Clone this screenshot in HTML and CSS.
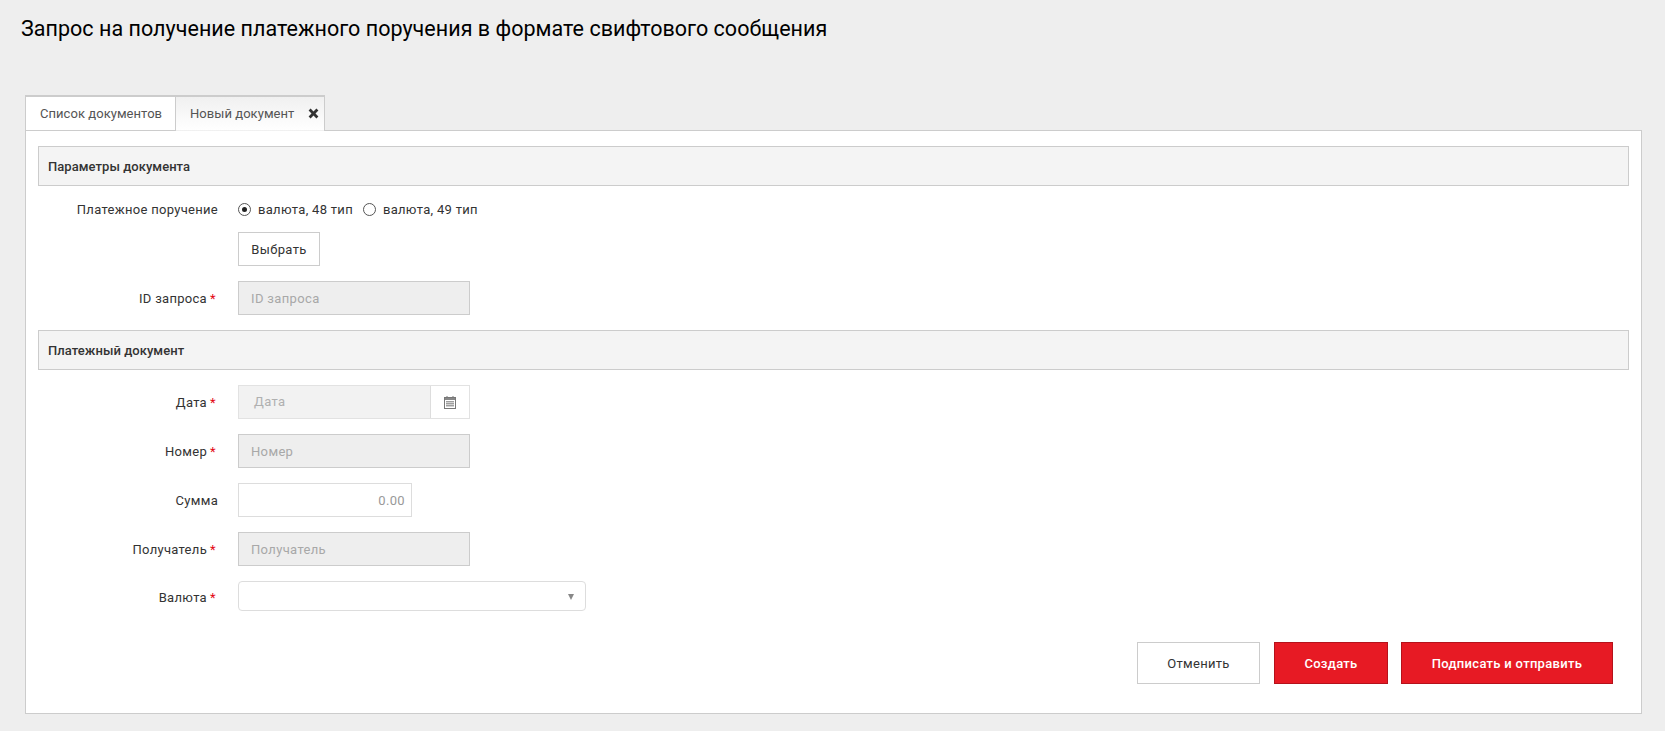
FILE: index.html
```html
<!DOCTYPE html>
<html lang="ru">
<head>
<meta charset="utf-8">
<title>Запрос</title>
<link rel="stylesheet" href="styles.css">
</head>
<body>
<h1 class="title">Запрос на получение платежного поручения в формате свифтового сообщения</h1>
<div class="tabs">
  <div class="tab">Список документов</div>
  <div class="tab active">Новый документ
    <svg class="close" width="11" height="11" viewBox="0 0 11 11"><path d="M2.6 0.6 5.5 3.5 8.4 0.6 10.4 2.6 7.5 5.5 10.4 8.4 8.4 10.4 5.5 7.5 2.6 10.4 0.6 8.4 3.5 5.5 0.6 2.6Z" fill="#333"/></svg>
  </div>
</div>
<main class="panel">
  <div class="section">Параметры документа</div>
  <div class="row row-radio">
    <div class="label">Платежное поручение</div>
    <div class="radios">
      <span class="radio checked"></span><span class="radio-text">валюта, 48 тип</span>
      <span class="radio"></span><span class="radio-text">валюта, 49 тип</span>
    </div>
  </div>
  <div class="row row-pick">
    <div class="label"></div>
    <button class="btn-pick">Выбрать</button>
  </div>
  <div class="row row-last">
    <div class="label">ID запроса<span class="req">*</span></div>
    <div class="input disabled">ID запроса</div>
  </div>
  <div class="section">Платежный документ</div>
  <div class="row row-first">
    <div class="label">Дата<span class="req">*</span></div>
    <div class="date">
      <div class="date-field">Дата</div>
      <div class="date-addon">
        <svg width="12" height="13" viewBox="0 0 12 13"><path d="M3 0V2M9 0V2" stroke="#777" fill="none"/><rect x="0.5" y="1.5" width="11" height="11" fill="none" stroke="#777"/><rect x="1" y="2" width="10" height="2" fill="#888"/><path d="M2 5.5h8M2 7.5h8M2 9.5h8M3 5v6M5 5v6M7 5v6M9 5v6" stroke="#999" stroke-width="0.9" fill="none"/></svg>
      </div>
    </div>
  </div>
  <div class="row">
    <div class="label">Номер<span class="req">*</span></div>
    <div class="input disabled">Номер</div>
  </div>
  <div class="row">
    <div class="label">Сумма</div>
    <div class="input amount">0.00</div>
  </div>
  <div class="row">
    <div class="label">Получатель<span class="req">*</span></div>
    <div class="input disabled">Получатель</div>
  </div>
  <div class="row row-select">
    <div class="label">Валюта<span class="req">*</span></div>
    <div class="select"><span class="arrow"></span></div>
  </div>
  <div class="actions">
    <button class="btn cancel">Отменить</button>
    <button class="btn primary create">Создать</button>
    <button class="btn primary send">Подписать и отправить</button>
  </div>
</main>
</body>
</html>
```
FILE: styles.css
```css
* { box-sizing: border-box; }
html, body { margin: 0; padding: 0; }
body {
  background: #eeeeee;
  font-family: Roboto, "Liberation Sans", sans-serif;
  font-size: 13px;
  color: #333;
  height: 731px;
  overflow: hidden;
}
.title {
  margin: 0;
  padding: 16px 0 0 21px;
  height: 95px;
  font-size: 21.5px;
  line-height: 26px;
  font-weight: 400;
  letter-spacing: 0.03px;
  color: #000;
}
.tabs {
  display: flex;
  margin-left: 25px;
  height: 36px;
  position: relative;
  z-index: 1;
}
.tab {
  display: flex;
  align-items: center;
  height: 36px;
  padding: 0 14px;
  width: 151px;
  background: #fff;
  border: 1px solid #ccc;
  border-top-width: 2px;
  letter-spacing: 0.05px;
  color: #555;
  white-space: nowrap;
}
.tab.active {
  width: 150px;
  margin-left: -1px;
  border-bottom-color: transparent;
  background: linear-gradient(#f0f0f0, #fff);
  justify-content: space-between;
  padding-right: 5px;
}
.close { flex: none; }
.panel {
  margin: -1px 0 0 25px;
  width: 1617px;
  height: 584px;
  padding: 15px 12px 0;
  background: #fff;
  border: 1px solid #ccc;
}
.section {
  height: 40px;
  line-height: 39px;
  padding-left: 9px;
  background: #f4f4f4;
  border: 1px solid #ccc;
  font-weight: 500;
  letter-spacing: 0.05px;
  color: #333;
}
.row {
  display: flex;
  align-items: center;
  margin-top: 15px;
}
.row-radio { margin-top: 14px; height: 18px; }
.row-pick { margin-top: 14px; }
.row-first { margin-top: 15px; }
.row-last { margin-top: 15px; margin-bottom: 15px; }
.row-select { margin-top: 15px; }
.label {
  width: 180px;
  margin-right: 20px;
  flex: none;
  text-align: right;
  letter-spacing: 0.3px;
  color: #333;
  white-space: nowrap;
}
.req {
  display: inline-block;
  width: 11px;
  padding-right: 2px;
  text-align: right;
  color: #e30613;
}
.row-select .label { padding-top: 3px; }
.radios { display: flex; align-items: center; }
.radio {
  width: 13px;
  height: 13px;
  border: 1px solid #555;
  border-radius: 50%;
  position: relative;
  margin-right: 7px;
}
.radio.checked::after {
  content: "";
  position: absolute;
  left: 3px;
  top: 3px;
  width: 5px;
  height: 5px;
  border-radius: 50%;
  background: #222;
}
.radio-text { margin-right: 10px; letter-spacing: 0.3px; }
.btn-pick {
  width: 82px;
  height: 34px;
  padding: 0;
  background: #fff;
  border: 1px solid #ccc;
  font: inherit;
  letter-spacing: 0.35px;
  color: #333;
}
.input {
  width: 232px;
  height: 34px;
  line-height: 34px;
  padding: 0 12px;
  border: 1px solid #ccc;
  letter-spacing: 0.35px;
  background: #fff;
}
.disabled { background: #eeeeee; color: #a8a8a8; }
.date {
  display: flex;
  width: 232px;
  height: 34px;
  border: 1px solid #e2e2e2;
}
.date-field {
  flex: 1;
  padding-left: 15px;
  line-height: 32px;
  background: #f2f2f2;
  color: #b0b0b0;
  letter-spacing: 0.35px;
  border-right: 1px solid #ddd;
}
.date-addon {
  width: 38px;
  display: flex;
  align-items: center;
  justify-content: center;
}
.amount {
  width: 174px;
  text-align: right;
  padding-right: 6px;
  color: #999;
  border-color: #ddd;
}
.select {
  width: 348px;
  height: 30px;
  border: 1px solid #ddd;
  border-radius: 4px;
  position: relative;
  display: flex;
  align-items: center;
  justify-content: flex-end;
  padding: 2px 11px 0 0;
}
.arrow {
  width: 0;
  height: 0;
  border-left: 3.5px solid transparent;
  border-right: 3.5px solid transparent;
  border-top: 6px solid #888;
}
.actions {
  display: flex;
  justify-content: flex-end;
  gap: 13px;
  margin-top: 31px;
  padding-right: 16px;
}
.btn {
  width: 123px;
  height: 42px;
  padding: 0;
  background: #fff;
  border: 1px solid #ccc;
  font: inherit;
  letter-spacing: 0.3px;
  color: #333;
}
.btn.primary {
  background: #e71a24;
  border-color: #b5121b;
  color: #fff;
  font-weight: 500;
}
.cancel { margin-right: 1px; }
.create { width: 114px; }
.send { width: 212px; }
```
